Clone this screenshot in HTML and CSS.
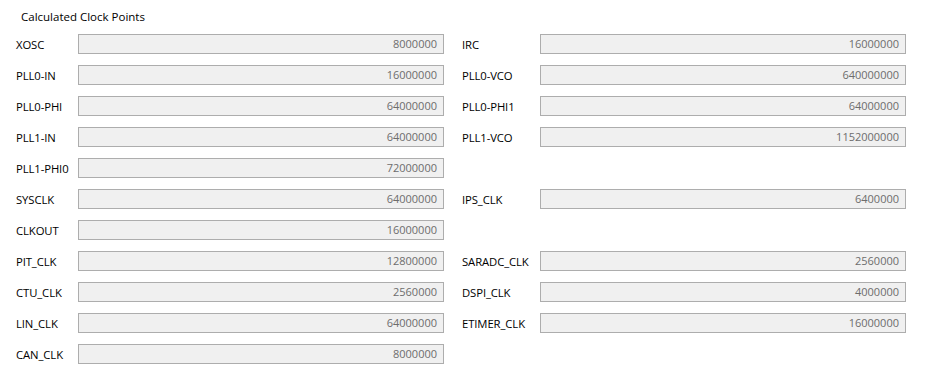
FILE: index.html
```html
<!DOCTYPE html>
<html lang="en">
<head>
  <meta charset="UTF-8">
  <title>Calculated Clock Points</title>
  <link rel="stylesheet" href="styles.css">
</head>
<body>
  <div class="panel">
    <div class="title">Calculated Clock Points</div>
    <div class="grid">
      <label>XOSC</label><div class="field">8000000</div>
      <label class="right">IRC</label><div class="field">16000000</div>

      <label>PLL0-IN</label><div class="field">16000000</div>
      <label class="right">PLL0-VCO</label><div class="field">640000000</div>

      <label>PLL0-PHI</label><div class="field">64000000</div>
      <label class="right">PLL0-PHI1</label><div class="field">64000000</div>

      <label>PLL1-IN</label><div class="field">64000000</div>
      <label class="right">PLL1-VCO</label><div class="field">1152000000</div>

      <label>PLL1-PHI0</label><div class="field">72000000</div>
      <span></span><span></span>

      <label>SYSCLK</label><div class="field">64000000</div>
      <label class="right">IPS_CLK</label><div class="field">6400000</div>

      <label>CLKOUT</label><div class="field">16000000</div>
      <span></span><span></span>

      <label>PIT_CLK</label><div class="field">12800000</div>
      <label class="right">SARADC_CLK</label><div class="field">2560000</div>

      <label>CTU_CLK</label><div class="field">2560000</div>
      <label class="right">DSPI_CLK</label><div class="field">4000000</div>

      <label>LIN_CLK</label><div class="field">64000000</div>
      <label class="right">ETIMER_CLK</label><div class="field">16000000</div>

      <label>CAN_CLK</label><div class="field">8000000</div>
      <span></span><span></span>
    </div>
  </div>
</body>
</html>
```

FILE: styles.css
```css
body {
  margin: 0;
  background: #ffffff;
  font-family: "Open Sans", "Noto Sans", sans-serif;
  font-size: 11px;
  color: #000000;
}
.panel {
  padding: 9px 0 0 16px;
}
.title {
  padding-left: 5px;
  height: 25px;
  line-height: 16px;
  font-size: 11.5px;
}
.grid {
  display: grid;
  grid-template-columns: 62px 366px 96px 366px;
  grid-auto-rows: 20px;
  row-gap: 11px;
  align-items: center;
}
.grid label {
  white-space: nowrap;
  font-size: 11.3px;
  letter-spacing: -0.1px;
}
.grid label.right {
  padding-left: 18px;
}
.field {
  box-sizing: border-box;
  height: 20px;
  line-height: 18px;
  border: 1px solid #adadad;
  background: #f0f0f0;
  color: #6d6d6d;
  text-align: right;
  padding-right: 6px;
}
```
